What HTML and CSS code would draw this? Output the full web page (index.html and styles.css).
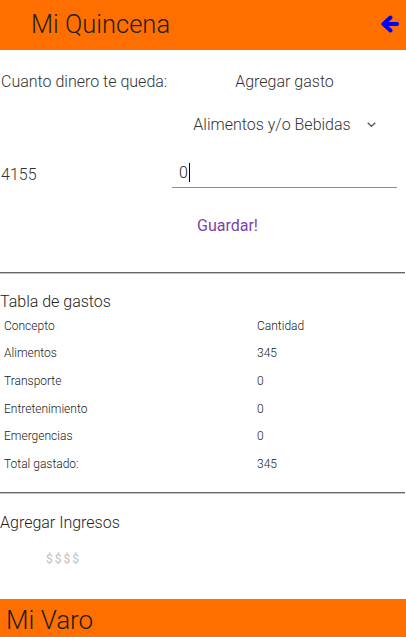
FILE: index.html
```html
<!DOCTYPE html>
<html lang="es">
<head>
<meta charset="utf-8">
<title>Mi Quincena</title>
<link rel="stylesheet" href="styles.css">
</head>
<body>
<header class="topbar">
  <h1 class="topbar-title">Mi Quincena</h1>
  <svg class="back-icon" width="18" height="18" viewBox="0 0 18 18" aria-hidden="true">
    <polyline points="9.5,2.5 2.5,9 9.5,15.5" fill="none" stroke="#0000ff" stroke-width="4" stroke-linecap="round" stroke-linejoin="round"/>
    <line x1="3" y1="9" x2="16" y2="9" stroke="#0000ff" stroke-width="4" stroke-linecap="round"/>
  </svg>
</header>

<main class="content">
  <section class="form-grid">
    <div class="cell label-left row1">Cuanto dinero te queda:</div>
    <div class="cell center row1">Agregar gasto</div>
    <div class="cell center row2 right">
      <span class="select">Alimentos y/o Bebidas
        <svg class="chevron" width="9" height="5" viewBox="0 0 9 5" aria-hidden="true"><polyline points="0.7,0.7 4.5,4.3 8.3,0.7" fill="none" stroke="#555" stroke-width="1.3"/></svg>
      </span>
    </div>
    <div class="cell label-left row3 amount">4155</div>
    <div class="cell row3 right input-wrap">
      <div class="text-input">0<span class="caret"></span></div>
    </div>
    <div class="cell row4 right">
      <button class="save-btn" type="button">Guardar!</button>
    </div>
  </section>

  <hr class="divider first">

  <section class="expenses">
    <h2 class="section-title">Tabla de gastos</h2>
    <div class="table">
      <div class="tr"><span>Concepto</span><span>Cantidad</span></div>
      <div class="tr"><span>Alimentos</span><span>345</span></div>
      <div class="tr"><span>Transporte</span><span>0</span></div>
      <div class="tr"><span>Entretenimiento</span><span>0</span></div>
      <div class="tr"><span>Emergencias</span><span>0</span></div>
      <div class="tr"><span>Total gastado:</span><span>345</span></div>
    </div>
  </section>

  <hr class="divider second">

  <section class="income">
    <h2 class="section-title">Agregar Ingresos</h2>
    <div class="income-input">$$$$</div>
  </section>
</main>

<footer class="bottombar">
  <span class="bottombar-title">Mi Varo</span>
</footer>
</body>
</html>
```

FILE: styles.css
```css
* { box-sizing: border-box; }

html, body {
  margin: 0;
  padding: 0;
  background: #ffffff;
  font-family: Roboto, "Noto Sans", "Liberation Sans", sans-serif;
  color: #333333;
}

.topbar {
  height: 50px;
  background: #ff6f00;
  display: flex;
  align-items: center;
  justify-content: space-between;
  padding: 0 7px 0 31px;
}

.topbar-title {
  margin: 0;
  font-size: 25.5px;
  font-weight: 300;
  color: #222222;
  line-height: 1;
}

.back-icon {
  display: block;
  margin-top: -3px;
}

.content {
  padding-top: 12px;
}

.form-grid {
  display: grid;
  grid-template-columns: 172px 225px;
  grid-template-rows: 38px 48px 52px 51px;
  font-size: 16px;
  font-weight: 300;
}

.cell {
  display: flex;
  align-items: center;
}

.label-left { padding-left: 1px; }
.center { justify-content: center; }
.row1 { grid-row: 1; }
.row2 { grid-row: 2; }
.row3 { grid-row: 3; }
.row4 { grid-row: 4; }
.right { grid-column: 2; }

.select {
  display: inline-flex;
  align-items: center;
  gap: 16px;
  color: #333333;
}

.chevron { display: block; margin-top: 1px; }

.input-wrap {
  align-items: flex-start;
  padding-top: 10px;
}

.text-input {
  width: 100%;
  height: 30px;
  border-bottom: 1px solid #ff6f00;
  padding-left: 7px;
  display: flex;
  align-items: center;
  font-size: 16px;
  font-weight: 300;
  color: #222222;
}

.caret {
  display: inline-block;
  width: 1px;
  height: 19px;
  background: #000000;
  margin-left: 1px;
}

.save-btn {
  margin-left: 25px;
  background: none;
  border: none;
  padding: 0;
  font-family: inherit;
  font-size: 16px;
  font-weight: 400;
  color: #7a44a8;
  cursor: pointer;
}

.divider {
  margin: 0;
  height: 2px;
  border: none;
  border-top: 1px solid #666666;
  border-bottom: 1px solid #c4c4c4;
  width: 405px;
}

.divider.first { margin-top: 21px; }
.divider.second { margin-top: 14px; }

.section-title {
  margin: 0;
  font-size: 16px;
  font-weight: 300;
  line-height: 20px;
  color: #222222;
}

.expenses { padding-top: 18px; }

.table {
  font-size: 12px;
  font-weight: 300;
  color: #222222;
}

.tr {
  display: grid;
  grid-template-columns: 253px 1fr;
  padding-left: 4px;
  height: 27.6px;
  align-items: center;
}

.income { padding-top: 19px; }

.income-input {
  margin-top: 16px;
  padding-left: 46px;
  font-size: 12px;
  letter-spacing: 2px;
  color: #c0c0c0;
  line-height: 20px;
}

.bottombar {
  margin-top: 30px;
  height: 50px;
  background: #ff6f00;
  padding: 8px 6px 0;
}

.bottombar-title {
  font-size: 26px;
  font-weight: 300;
  color: #222222;
  line-height: 26px;
}
```
